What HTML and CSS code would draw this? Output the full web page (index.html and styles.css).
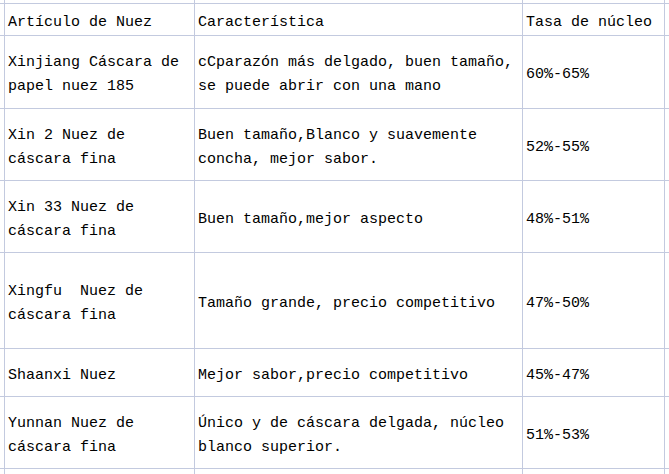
FILE: index.html
```html
<!DOCTYPE html>
<html lang="es">
<head>
<meta charset="utf-8">
<title>Nuez</title>
<link rel="stylesheet" href="styles.css">
</head>
<body>
<div class="sheet">
  <div class="c"></div><div class="c"></div><div class="c"></div><div class="c"></div><div class="c"></div>

  <div class="c"></div>
  <div class="c t">Artículo de Nuez</div>
  <div class="c t">Característica</div>
  <div class="c t">Tasa de núcleo</div>
  <div class="c"></div>

  <div class="c"></div>
  <div class="c t">Xinjiang Cáscara de papel nuez 185</div>
  <div class="c t">cCparazón más delgado, buen tamaño, se puede abrir con una mano</div>
  <div class="c t">60%-65%</div>
  <div class="c"></div>

  <div class="c"></div>
  <div class="c t">Xin 2 Nuez de cáscara fina</div>
  <div class="c t">Buen tamaño,Blanco y suavemente concha, mejor sabor.</div>
  <div class="c t">52%-55%</div>
  <div class="c"></div>

  <div class="c"></div>
  <div class="c t">Xin 33 Nuez de cáscara fina</div>
  <div class="c t">Buen tamaño,mejor aspecto</div>
  <div class="c t">48%-51%</div>
  <div class="c"></div>

  <div class="c"></div>
  <div class="c t">Xingfu&nbsp; Nuez de cáscara fina</div>
  <div class="c t">Tamaño grande, precio competitivo</div>
  <div class="c t">47%-50%</div>
  <div class="c"></div>

  <div class="c"></div>
  <div class="c t">Shaanxi Nuez</div>
  <div class="c t">Mejor sabor,precio competitivo</div>
  <div class="c t">45%-47%</div>
  <div class="c"></div>

  <div class="c"></div>
  <div class="c t">Yunnan Nuez de cáscara fina</div>
  <div class="c t">Único y de cáscara delgada, núcleo blanco superior.</div>
  <div class="c t">51%-53%</div>
  <div class="c"></div>

  <div class="c"></div><div class="c"></div><div class="c"></div><div class="c"></div><div class="c"></div>
</div>
</body>
</html>
```
FILE: styles.css
```css
html, body {
  margin: 0;
  padding: 0;
  background: #ffffff;
  overflow: hidden;
}

.sheet {
  display: grid;
  grid-template-columns: 4px 189px 327px 141px 1fr;
  grid-template-rows: 3px 31px 72px 71px 71px 95px 47px 71px 20px;
  gap: 1px;
  background: #c3cadf;
  width: 669px;
  height: 474px;
  overflow: hidden;
}

.c {
  background: #ffffff;
  min-width: 0;
}

.t {
  display: flex;
  align-items: center;
  padding: 6px 3px 0 3px;
  font-family: "Liberation Mono", "DejaVu Sans Mono", monospace;
  font-size: 15px;
  line-height: 24px;
  color: #000000;
  white-space: normal;
}
```
